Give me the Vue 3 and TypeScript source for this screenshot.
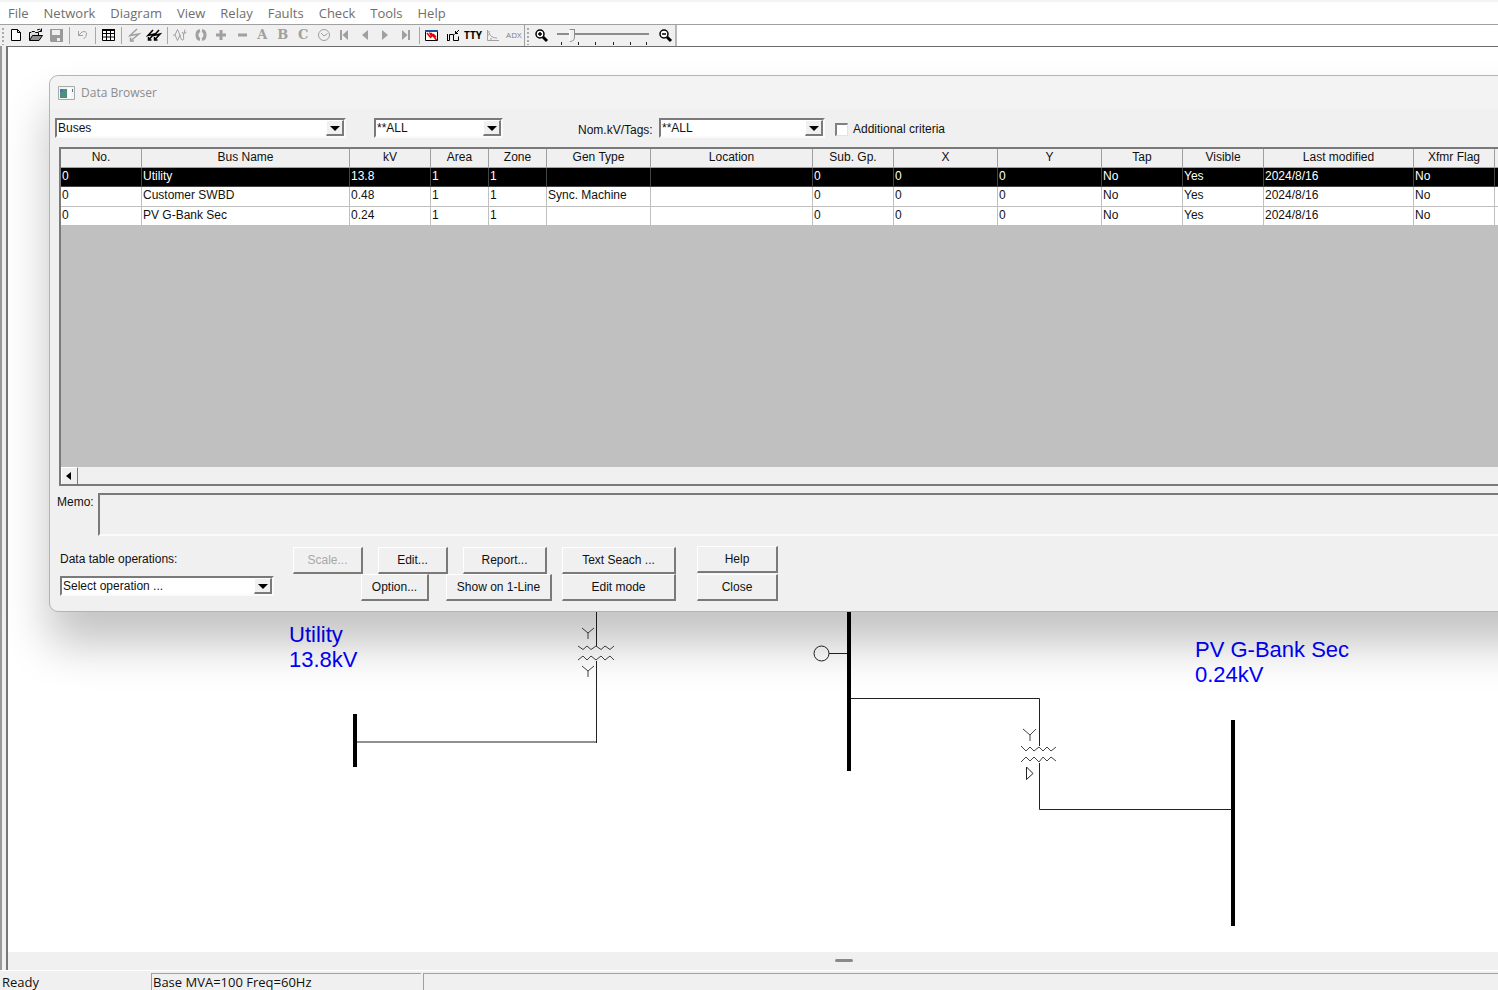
<script setup lang="ts">
import { ref } from 'vue'

interface Shape {
  d: string
  fill?: string
  stroke?: string
  width?: number
}
interface Tool {
  name: string
  shapes?: Shape[]
  text?: string
  kind?: string
  off?: boolean
}

const K = '#000'
const G = '#a0a0a0'

const menus = ['File', 'Network', 'Diagram', 'View', 'Relay', 'Faults', 'Check', 'Tools', 'Help']

const groups: { size: string; tools: Tool[] }[] = [
  {
    size: 'three',
    tools: [
      { name: 'New', shapes: [{ d: 'M3.5 2.5H9.5L12.5 5.5V13.5H3.5ZM9.5 2.5V5.5H12.5', fill: '#fff', stroke: K }] },
      {
        name: 'Open',
        shapes: [
          { d: 'M1.5 13V5.5H3L4 4.5H6.5L7.5 5.5H10.5V8', fill: '#ddd', stroke: K },
          { d: 'M1.5 13.5L4.5 8.5H14.5L11 13.5Z', fill: '#909090', stroke: K },
          { d: 'M9 3Q11.5 1 13.5 4M13.5 1.5V4.5H10.5', stroke: K },
        ],
      },
      {
        name: 'Save',
        off: true,
        shapes: [
          { d: 'M2 2H15V15H3L2 14Z', fill: '#999' },
          { d: 'M4 3H12V8H4ZM9 11H12V14H9Z', fill: '#eee' },
        ],
      },
    ],
  },
  {
    size: 'one',
    tools: [{ name: 'Undo', off: true, shapes: [{ d: 'M4.5 4V8.5H9M4.5 8.5L8 5Q12.5 3.5 12.5 7Q12.5 10 9.5 12', stroke: G }] }],
  },
  {
    size: 'one',
    tools: [
      {
        name: 'Data browser',
        shapes: [
          { d: 'M2.5 3H14.5V13.5H2.5ZM2.5 6.5H14.5M2.5 10H14.5M6.5 3V13.5M10.5 3V13.5', fill: '#fff', stroke: K },
          { d: 'M2 2H15V4H2Z', fill: K },
        ],
      },
    ],
  },
  {
    size: 'two',
    tools: [
      { name: 'Fault', off: true, shapes: [{ d: 'M11 2L4 8.5L13 7L5 13.5M4.5 10.5V14H8', stroke: G, width: 1.5 }] },
      { name: 'Faults', shapes: [{ d: 'M7 3L2 8.5L8 7L3 12.5M2.5 10V13H5.5M13 3L8 8.5L14 7L9 12.5M8.5 10V13H11.5', stroke: K, width: 1.5 }] },
    ],
  },
  {
    size: 'twelve',
    tools: [
      { name: 'Waveform', off: true, shapes: [{ d: 'M1 8H3L5.5 2.5L8 8L5.5 13.5L3 8M8 8Q9 14 11 13Q12 12 11.5 8L13 2.5M10 5L11.5 7L14.5 5', stroke: G }] },
      { name: 'Loop', off: true, shapes: [{ d: 'M7 3.5Q4 4 4 8Q4 12 7 12.5M9 3.5Q12 4 12 8Q12 12 9 12.5', stroke: G, width: 3 }] },
      { name: 'Positive sequence', off: true, shapes: [{ d: 'M3 8H13M8 3V13', stroke: G, width: 3 }] },
      { name: 'Negative sequence', off: true, shapes: [{ d: 'M4 8H13', stroke: G, width: 3 }] },
      { name: 'Phase A', off: true, text: 'A', kind: 'phase' },
      { name: 'Phase B', off: true, text: 'B', kind: 'phase' },
      { name: 'Phase C', off: true, text: 'C', kind: 'phase' },
      { name: 'Time', off: true, shapes: [{ d: 'M8 2.5A5.5 5.5 0 1 0 8 13.5A5.5 5.5 0 1 0 8 2.5M5 6L8 9L11.5 6.5', stroke: G }] },
      { name: 'First', off: true, shapes: [{ d: 'M4 3H6V13H4ZM12 3V13L6.5 8Z', fill: G }] },
      { name: 'Previous', off: true, shapes: [{ d: 'M11 3V13L5 8Z', fill: G }] },
      { name: 'Next', off: true, shapes: [{ d: 'M5 3V13L11 8Z', fill: G }] },
      { name: 'Last', off: true, shapes: [{ d: 'M10 3H12V13H10ZM4 3V13L9.5 8Z', fill: G }] },
    ],
  },
  {
    size: 'five',
    tools: [
      {
        name: 'Plot',
        shapes: [
          { d: 'M1.5 3.5H13.5V13.5H1.5Z', fill: '#fff', stroke: K },
          { d: 'M1 3H14V5H1Z', fill: '#1a4f9c' },
          { d: 'M3 6L7 11M5.5 5.5L8 10M7 6L12.5 13M9 7L12 10', stroke: '#e00', width: 1.5 },
        ],
      },
      { name: 'Relay', shapes: [{ d: 'M2 13.5H4.5V7.5H8.5V13.5H13.5V9.5M2.5 7V13M9.5 7.5L14 3M10.5 4V6.5H13', stroke: K }] },
      { name: 'TTY', text: 'TTY', kind: 'tty' },
      { name: 'Curve', off: true, shapes: [{ d: 'M2.5 3V13.5H14M2 5H5M2 8H4M4 6Q6 11 12 11M6 11V13', stroke: G }] },
      { name: 'ADX', text: 'ADX', kind: 'adx', off: true },
    ],
  },
]

const columns = ['No.', 'Bus Name', 'kV', 'Area', 'Zone', 'Gen Type', 'Location', 'Sub. Gp.', 'X', 'Y', 'Tap', 'Visible', 'Last modified', 'Xfmr Flag', '']
const widths = [81, 208, 81, 58, 58, 104, 162, 81, 104, 104, 81, 81, 150, 81, 60]
const rows = [
  ['0', 'Utility', '13.8', '1', '1', '', '', '0', '0', '0', 'No', 'Yes', '2024/8/16', 'No', ''],
  ['0', 'Customer SWBD', '0.48', '1', '1', 'Sync. Machine', '', '0', '0', '0', 'No', 'Yes', '2024/8/16', 'No', ''],
  ['0', 'PV G-Bank Sec', '0.24', '1', '1', '', '', '0', '0', '0', 'No', 'Yes', '2024/8/16', 'No', ''],
]
const selected = ref(0)
const zoom = ref(14)
const extra = ref(false)
const memo = ref('')
</script>

<template>
  <div class="app">
    <nav class="menubar">
      <button v-for="m in menus" :key="m" type="button">{{ m }}</button>
    </nav>

    <div class="toolstrip">
      <div class="toolbar">
        <span class="grip"></span>
        <div v-for="(g, gi) in groups" :key="gi" class="group" :class="g.size">
          <button v-for="t in g.tools" :key="t.name" type="button" :aria-label="t.name" :disabled="t.off" :class="t.kind">
            <svg v-if="t.shapes" width="16" height="16" viewBox="0 0 16 16" aria-hidden="true">
              <path
                v-for="(s, si) in t.shapes"
                :key="si"
                :d="s.d"
                :fill="s.fill ?? 'none'"
                :stroke="s.stroke ?? 'none'"
                :stroke-width="s.width ?? 1"
              />
            </svg>
            <template v-else>{{ t.text }}</template>
          </button>
        </div>
      </div>
      <div class="toolbar">
        <span class="grip"></span>
        <button type="button" aria-label="Zoom in" class="lens">
          <svg width="16" height="16" viewBox="0 0 16 16" aria-hidden="true">
            <circle cx="7" cy="6" r="4" fill="#fff" stroke="#000" stroke-width="1.5" />
            <path d="M5 6H9M7 4V8" stroke="#000" stroke-width="1.5" />
            <path d="M10 9L14 13" stroke="#000" stroke-width="3" />
          </svg>
        </button>
        <div class="slider">
          <input v-model="zoom" type="range" min="0" max="100" aria-label="Zoom" />
          <svg width="92" height="3" viewBox="0 0 92 3" aria-hidden="true">
            <path d="M4.5 0V3M21.5 0V3M38.5 0V3M56.5 0V3M73.5 0V3M89.5 0V3" stroke="#222" />
          </svg>
        </div>
        <button type="button" aria-label="Zoom out" class="lens">
          <svg width="16" height="16" viewBox="0 0 16 16" aria-hidden="true">
            <circle cx="7" cy="6" r="4" fill="#fff" stroke="#000" stroke-width="1.5" />
            <path d="M5 6H9" stroke="#000" stroke-width="1.5" />
            <path d="M10 9L14 13" stroke="#000" stroke-width="3" />
          </svg>
        </button>
      </div>
    </div>

    <main class="workspace">
      <div class="canvas">
        <svg class="diagram" width="100%" height="100%" role="img" aria-label="One-line diagram">
          <g transform="translate(-8 -47)" fill="none" stroke="#222" stroke-width="1">
            <g class="bus">
              <text x="289" y="642">Utility</text>
              <text x="289" y="667">13.8kV</text>
              <text x="1195" y="657">PV G-Bank Sec</text>
              <text x="1195" y="682">0.24kV</text>
            </g>
            <path d="M355 714V767" stroke="#000" stroke-width="4" />
            <path d="M849 600V771" stroke="#000" stroke-width="4" />
            <path d="M1233 720V926" stroke="#000" stroke-width="4" />
            <path d="M357 742H597M596.5 743V661M596.5 646V600" />
            <path d="M582 628L588 633L594 628M588 633V639M582 666L588 671L594 666M588 671V677" stroke="#444" />
            <path d="M578 646L583 649.5L587 646L591 649.5L596 646L601 649.5L605 646L610 649.5L614 646" stroke="#444" />
            <path d="M578 660L583 656L587 660L591 656L596 660L601 656L605 660L610 656L614 660" stroke="#444" />
            <circle cx="821.5" cy="653.5" r="7.5" />
            <path d="M829 653.5H847M851 698.5H1039.5V746M1039.5 763V809.5H1232" />
            <path d="M1023 729L1030 735L1036 729M1030 735V741" stroke="#444" />
            <path d="M1021 746L1026 751L1030 747L1034 751L1039 747L1043 751L1047 747L1051 751L1056 747" stroke="#444" />
            <path d="M1021 762L1026 757L1030 761L1034 757L1039 762L1043 757L1047 761L1051 757L1056 761" stroke="#444" />
            <path d="M1026.5 767V779.5L1033 773.5Z" />
          </g>
        </svg>
      </div>
      <div class="splitter"><span></span></div>

      <section class="dialog" aria-label="Data Browser">
        <header>
          <svg width="17" height="14" viewBox="0 0 17 14" aria-hidden="true">
            <path d="M.5 .5H16.5V13.5H.5Z" fill="#f4f4f4" stroke="#aaa" />
            <path d="M2 3H9V12H2Z" fill="#4d8f80" />
            <path d="M2 3H5V6H2Z" fill="#4a72b8" />
            <path d="M10 2H13V12H10Z" fill="#fff" />
            <path d="M14 3H15V6H14Z" fill="#4a72b8" />
          </svg>
          <h1>Data Browser</h1>
        </header>

        <div class="filters">
          <span class="combo buses"><select aria-label="Object type"><option>Buses</option></select></span>
          <span class="combo area"><select aria-label="Area"><option>**ALL</option></select></span>
          <label class="tag-label" for="tags">Nom.kV/Tags:</label>
          <span class="combo tags"><select id="tags"><option>**ALL</option></select></span>
          <label class="check"><input v-model="extra" type="checkbox" />Additional criteria</label>
        </div>

        <div class="grid">
          <div class="sheet">
            <table>
              <colgroup><col v-for="(w, i) in widths" :key="i" :style="{ width: w + 'px' }" /></colgroup>
              <thead>
                <tr><th v-for="(c, i) in columns" :key="i" scope="col">{{ c }}</th></tr>
              </thead>
              <tbody>
                <tr v-for="(r, ri) in rows" :key="ri" :class="{ selected: ri === selected }" @click="selected = ri">
                  <td v-for="(c, ci) in r" :key="ci">{{ c }}</td>
                </tr>
              </tbody>
            </table>
          </div>
          <div class="hscroll">
            <button type="button" aria-label="Scroll left">
              <svg width="5" height="8" viewBox="0 0 5 8" aria-hidden="true"><path d="M5 0V8L0 4Z" fill="#000" /></svg>
            </button>
          </div>
        </div>

        <div class="memo">
          <label for="memo">Memo:</label>
          <textarea id="memo" v-model="memo"></textarea>
        </div>

        <div class="actions">
          <div class="operations">
            <label for="operation">Data table operations:</label>
            <span class="combo"><select id="operation"><option>Select operation ...</option></select></span>
          </div>
          <div class="commands">
            <div class="line first">
              <button type="button" class="w70" disabled>Scale...</button>
              <button type="button" class="w70">Edit...</button>
              <button type="button" class="w84">Report...</button>
              <button type="button" class="w114">Text Seach ...</button>
            </div>
            <div class="line second">
              <button type="button" class="option">Option...</button>
              <button type="button" class="w106">Show on 1-Line</button>
              <button type="button" class="w114">Edit mode</button>
            </div>
          </div>
          <div class="closing">
            <button type="button">Help</button>
            <button type="button">Close</button>
          </div>
        </div>
      </section>
    </main>

    <footer class="status">
      <span class="ready">Ready</span>
      <span class="panel base">Base MVA=100 Freq=60Hz</span>
      <span class="panel rest"></span>
    </footer>
  </div>
</template>

<style>
body {
  margin: 0;
  overflow: hidden;
}
</style>

<style scoped>
*,
*::before,
*::after {
  box-sizing: border-box;
}
.app {
  display: flex;
  flex-direction: column;
  height: 100vh;
  overflow: hidden;
  background: #f0f0f0;
  color: #111;
  font: 12px/16px "Liberation Sans", Arial, sans-serif;
}
button,
select,
textarea,
input {
  font: inherit;
  color: inherit;
  margin: 0;
}
button {
  padding: 0;
}

.menubar {
  display: flex;
  height: 25px;
  flex: none;
  padding-left: 1px;
  background: #fff;
  border-top: 2px solid #f3f3f3;
  border-bottom: 1px solid #a0a0a0;
}
.menubar button {
  border: 0;
  background: none;
  padding: 0 8px 0 7px;
  color: #6e6e6e;
  font: 13px/22px "Open Sans", sans-serif;
}

.toolstrip {
  display: flex;
  height: 21px;
  flex: none;
  background: #fff;
}
.toolbar {
  display: flex;
  align-items: center;
  background: #f0f0f0;
  border-right: 1px solid #a0a0a0;
}
.toolbar + .toolbar {
  border-right: 2px solid #b8b8b8;
}
.grip {
  width: 6px;
  height: 18px;
  background: radial-gradient(circle at 3px 2px, #aaa 1px, transparent 1px) 0 0 / 6px 4px;
}
.group {
  display: flex;
  height: 17px;
}
.group + .group {
  margin-left: 3px;
  padding-left: 2px;
  border-left: 1px solid #a8a8a8;
}
.group button {
  display: flex;
  flex: 1;
  align-items: center;
  justify-content: center;
  height: 16px;
  border: 0;
  background: none;
}
.one { width: 23px; }
.three { width: 60px; }
.two { width: 43px; }
.twelve { width: 249px; }
.five { width: 105px; }
.group .tty {
  font: bold 10px/16px "Open Sans", sans-serif;
  color: #000;
}
.group .adx {
  font: 8px/16px "Open Sans", sans-serif;
  color: #808080;
}
.group .phase {
  font: bold 13px/16px "DejaVu Serif", serif;
  color: #a0a0a0;
}
.lens {
  display: flex;
  align-items: center;
  justify-content: center;
  width: 20px;
  height: 18px;
  border: 0;
  background: none;
}
.slider {
  display: flex;
  flex-direction: column;
  width: 92px;
  height: 19px;
  margin: 0 6px;
  padding-top: 2px;
}
.slider input {
  appearance: none;
  width: 100%;
  height: 14px;
  background: linear-gradient(#8c8c8c, #8c8c8c) 0 5px / 100% 2px no-repeat;
}
.slider input::-webkit-slider-thumb {
  appearance: none;
  width: 6px;
  height: 13px;
  background: #f0f0f0;
  border: 1px solid #8c8c8c;
  border-left-color: #fff;
  border-bottom-right-radius: 5px;
}

.workspace {
  position: relative;
  display: flex;
  flex-direction: column;
  flex: 1;
  min-height: 0;
  border-left: 2px solid #999;
  overflow: hidden;
}
.canvas {
  flex: 1;
  min-height: 0;
  margin-left: 4px;
  background: #fff;
  border-top: 1px solid #6c6c6c;
  border-left: 2px solid #777;
}
.diagram {
  display: block;
}
.bus text {
  fill: #00f;
  stroke: none;
  font: 22px "Liberation Sans", Arial, sans-serif;
}
.splitter {
  display: flex;
  flex: none;
  justify-content: flex-start;
  height: 18px;
  margin-left: 4px;
  padding-top: 7px;
  padding-left: 827px;
  border-left: 2px solid #777;
}
.splitter span {
  width: 18px;
  height: 3px;
  border-radius: 2px;
  background: #8a8a8a;
}

.dialog {
  position: absolute;
  top: 29px;
  left: 47px;
  right: -60px;
  padding-left: 5px;
  padding-bottom: 10px;
  background: #f0f0f0;
  border: 1px solid #b4b4b4;
  border-radius: 9px;
  box-shadow: 0 32px 46px rgba(0, 0, 0, 0.24);
}
.dialog header {
  display: flex;
  align-items: center;
  gap: 6px;
  height: 33px;
  margin-left: -5px;
  padding-left: 8px;
  background: #f3f3f3;
  border-radius: 9px 0 0 0;
}
.dialog h1 {
  margin: 0;
  color: #8c8c8c;
  font: 12px/16px "Open Sans", sans-serif;
}
.combo {
  position: relative;
  display: block;
  height: 20px;
  background: #fff;
  border: 2px solid;
  border-color: #7a7a7a #fafafa #fafafa #7a7a7a;
}
.combo select {
  appearance: none;
  display: block;
  width: 100%;
  height: 16px;
  padding: 0 20px 0 1px;
  border: 0;
  background: none;
  line-height: 16px;
}
.combo::after {
  content: "";
  position: absolute;
  top: 0;
  right: 0;
  width: 18px;
  height: 16px;
  background: #f0f0f0;
  border: solid;
  border-width: 1px 2px 2px 1px;
  border-color: #fff #7a7a7a #7a7a7a #fff;
  pointer-events: none;
}
.combo::before {
  content: "";
  position: absolute;
  z-index: 1;
  top: 6px;
  right: 4px;
  border: solid transparent;
  border-width: 5px 5px 0;
  border-top-color: #000;
  pointer-events: none;
}
.filters {
  display: flex;
  align-items: center;
  height: 38px;
}
.buses { width: 291px; }
.area { width: 129px; margin-left: 28px; }
.tag-label { width: 80px; margin-left: 75px; padding-top: 4px; white-space: nowrap; }
.tags { width: 166px; margin-left: 1px; }
.check {
  display: flex;
  align-items: center;
  gap: 5px;
  margin-left: 10px;
  padding-top: 2px;
}
.check input {
  appearance: none;
  width: 13px;
  height: 13px;
  background: #fff;
  border: 1px solid;
  border-width: 2px 1px 1px 2px;
  border-color: #808080 #e4e4e4 #e4e4e4 #808080;
}
.check input:checked {
  background: #444;
}
.grid {
  margin-left: 4px;
  border: 2px solid #7a7a7a;
}
.sheet {
  height: 318px;
  overflow: hidden;
  background: #c0c0c0;
}
table {
  width: 1494px;
  height: 77px;
  table-layout: fixed;
  border-collapse: separate;
  border-spacing: 0;
}
th,
td {
  height: 19px;
  padding: 0 1px 2px;
  overflow: hidden;
  border-right: 1px solid #c0c0c0;
  border-bottom: 1px solid #c0c0c0;
  line-height: 16px;
  white-space: nowrap;
}
th {
  background: #f0f0f0;
  border-color: #a0a0a0;
  font-weight: normal;
  text-align: center;
}
td {
  background: #fff;
  text-align: left;
}
.selected td {
  background: #000;
  border-color: #444;
  color: #fff;
}
.hscroll {
  height: 17px;
}
.hscroll button {
  display: flex;
  align-items: center;
  justify-content: center;
  width: 17px;
  height: 17px;
  padding-right: 3px;
  background: #f0f0f0;
  border: solid;
  border-width: 1px 1px 0 1px;
  border-color: #fff #7a7a7a #fff #fff;
}
.memo {
  display: flex;
  margin-top: 7px;
}
.memo label {
  width: 43px;
  padding: 1px 0 0 2px;
}
.memo textarea {
  flex: 1;
  height: 43px;
  padding: 2px;
  resize: none;
  background: #f0f0f0;
  border: 2px solid;
  border-color: #7a7a7a #fafafa #fafafa #7a7a7a;
}
.actions {
  display: flex;
  padding-top: 10px;
  padding-left: 5px;
}
.operations {
  width: 214px;
  padding-top: 5px;
}
.operations label {
  display: block;
  margin-bottom: 9px;
}
.commands {
  width: 384px;
  margin-left: 19px;
}
.line {
  display: flex;
}
.first {
  gap: 15px;
  padding-top: 1px;
}
.second {
  gap: 10px;
  padding-left: 68px;
}
.line button,
.closing button {
  height: 27px;
  background: #f0f0f0;
  border: solid;
  border-color: #fff #7a7a7a #7a7a7a #fff;
  border-width: 1px 2px 2px 1px;
}
.line button:disabled {
  color: #a8a8a8;
}
.option { width: 68px; margin-right: 7px; }
.w70 { width: 70px; }
.w84 { width: 84px; }
.w106 { width: 106px; }
.w114 { width: 114px; }
.closing {
  display: flex;
  flex-direction: column;
  gap: 1px;
  width: 81px;
  margin-left: 20px;
}

.status {
  display: flex;
  flex: none;
  height: 20px;
  padding-top: 2px;
  border-top: 1px solid #fff;
  font: 13px/16px "Open Sans", sans-serif;
}
.status span {
  white-space: nowrap;
}
.ready {
  width: 149px;
  padding: 1px 0 0 2px;
}
.panel {
  border-top: 1px solid #a0a0a0;
  border-left: 1px solid #a0a0a0;
}
.base {
  width: 270px;
  margin: 0 2px;
  padding-left: 1px;
}
.rest {
  flex: 1;
}
</style>
